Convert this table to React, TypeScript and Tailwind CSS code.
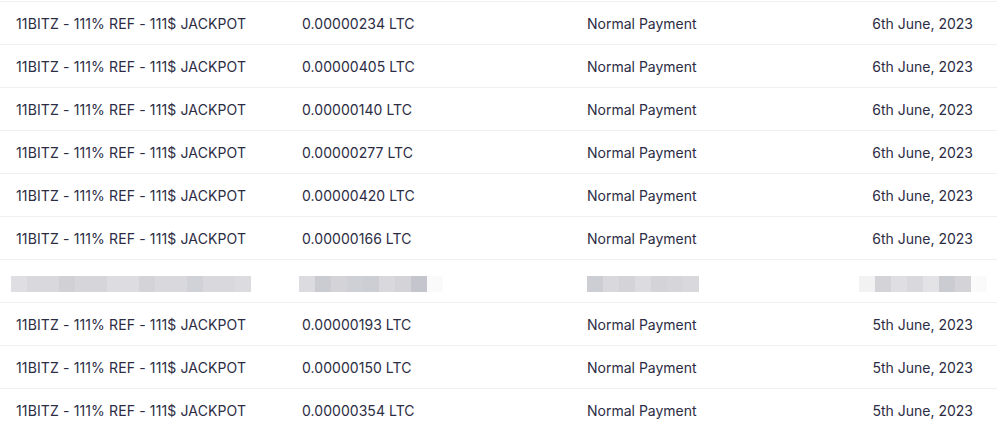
import React from 'react';

const rows = [
  { amount: '0.00000234', date: '6th June, 2023' },
  { amount: '0.00000405', date: '6th June, 2023' },
  { amount: '0.00000140', date: '6th June, 2023' },
  { amount: '0.00000277', date: '6th June, 2023' },
  { amount: '0.00000420', date: '6th June, 2023' },
  { amount: '0.00000166', date: '6th June, 2023' },
  null,
  { amount: '0.00000193', date: '5th June, 2023' },
  { amount: '0.00000150', date: '5th June, 2023' },
  { amount: '0.00000354', date: '5th June, 2023' },
];

// blurred (pixelated) row cells, 16px each
const blurCols = [
  [
    'bg-[#dfdfe3]', 'bg-[#d8d8dd]', 'bg-[#d8d8dd]', 'bg-[#d0d0d5]', 'bg-[#d5d5da]',
    'bg-[#d5d5da]', 'bg-[#dddde1]', 'bg-[#dddde1]', 'bg-[#d3d3d8]', 'bg-[#d8d8dd]',
    'bg-[#d8d8dd]', 'bg-[#d0d2d7]', 'bg-[#d8d8dd]', 'bg-[#d8d8dd]', 'bg-[#dcdce0]',
  ],
  [
    'bg-[#dcdce0]', 'bg-[#cbccd1]', 'bg-[#d3d3d8]', 'bg-[#cfd0d5]', 'bg-[#cdced3]',
    'bg-[#d8d8dd]', 'bg-[#d3d3d8]', 'bg-[#c5c6cd]', 'bg-[#fafafa]',
  ],
  [
    'bg-[#cdced3]', 'bg-[#d8d8dd]', 'bg-[#d3d3d8]', 'bg-[#dcdce0]', 'bg-[#d3d3d8]',
    'bg-[#d5d5da]', 'bg-[#d8d8dd]',
  ],
  [
    'bg-[#f2f2f3]', 'bg-[#d3d3d8]', 'bg-[#dfdfe3]', 'bg-[#d8d8dd]', 'bg-[#e3e3e6]',
    'bg-[#cbccd1]', 'bg-[#d3d3d8]', 'bg-[#fafafa]',
  ],
];

function Blur({ cells, className }: { cells: string[]; className: string }) {
  return (
    <div className={`flex h-4 ${className}`}>
      {cells.map((c, i) => (
        <div key={i} className={`w-4 h-4 ${c}`} />
      ))}
    </div>
  );
}

export default function App() {
  return (
    <div
      className="w-[997px] h-[427px] overflow-hidden bg-white text-[#2c2c44] text-[14px]"
      style={{ fontFamily: 'Inter, "Noto Sans", sans-serif' }}
    >
      <div className="h-[2px] border-b border-[#efeff2]" />
      {rows.map((row, i) =>
        row ? (
          <div
            key={i}
            className="h-[43px] border-b border-[#efeff2] grid grid-cols-[286px_285px_1fr_auto] items-center pl-4 pr-6"
          >
            <div className="tracking-[0.13px]">11BITZ - 111% REF - 111$ JACKPOT</div>
            <div className="tracking-[0.05px]">{row.amount} LTC</div>
            <div>Normal Payment</div>
            <div className="text-right">{row.date}</div>
          </div>
        ) : (
          <div
            key={i}
            className="h-[43px] border-b border-[#efeff2] grid grid-cols-[286px_285px_1fr_auto] items-start pt-4 pl-4 pr-6"
          >
            <Blur cells={blurCols[0]} className="-ml-[5px]" />
            <Blur cells={blurCols[1]} className="-ml-[3px]" />
            <Blur cells={blurCols[2]} className="" />
            <Blur cells={blurCols[3]} className="-mr-[14px]" />
          </div>
        )
      )}
    </div>
  );
}
